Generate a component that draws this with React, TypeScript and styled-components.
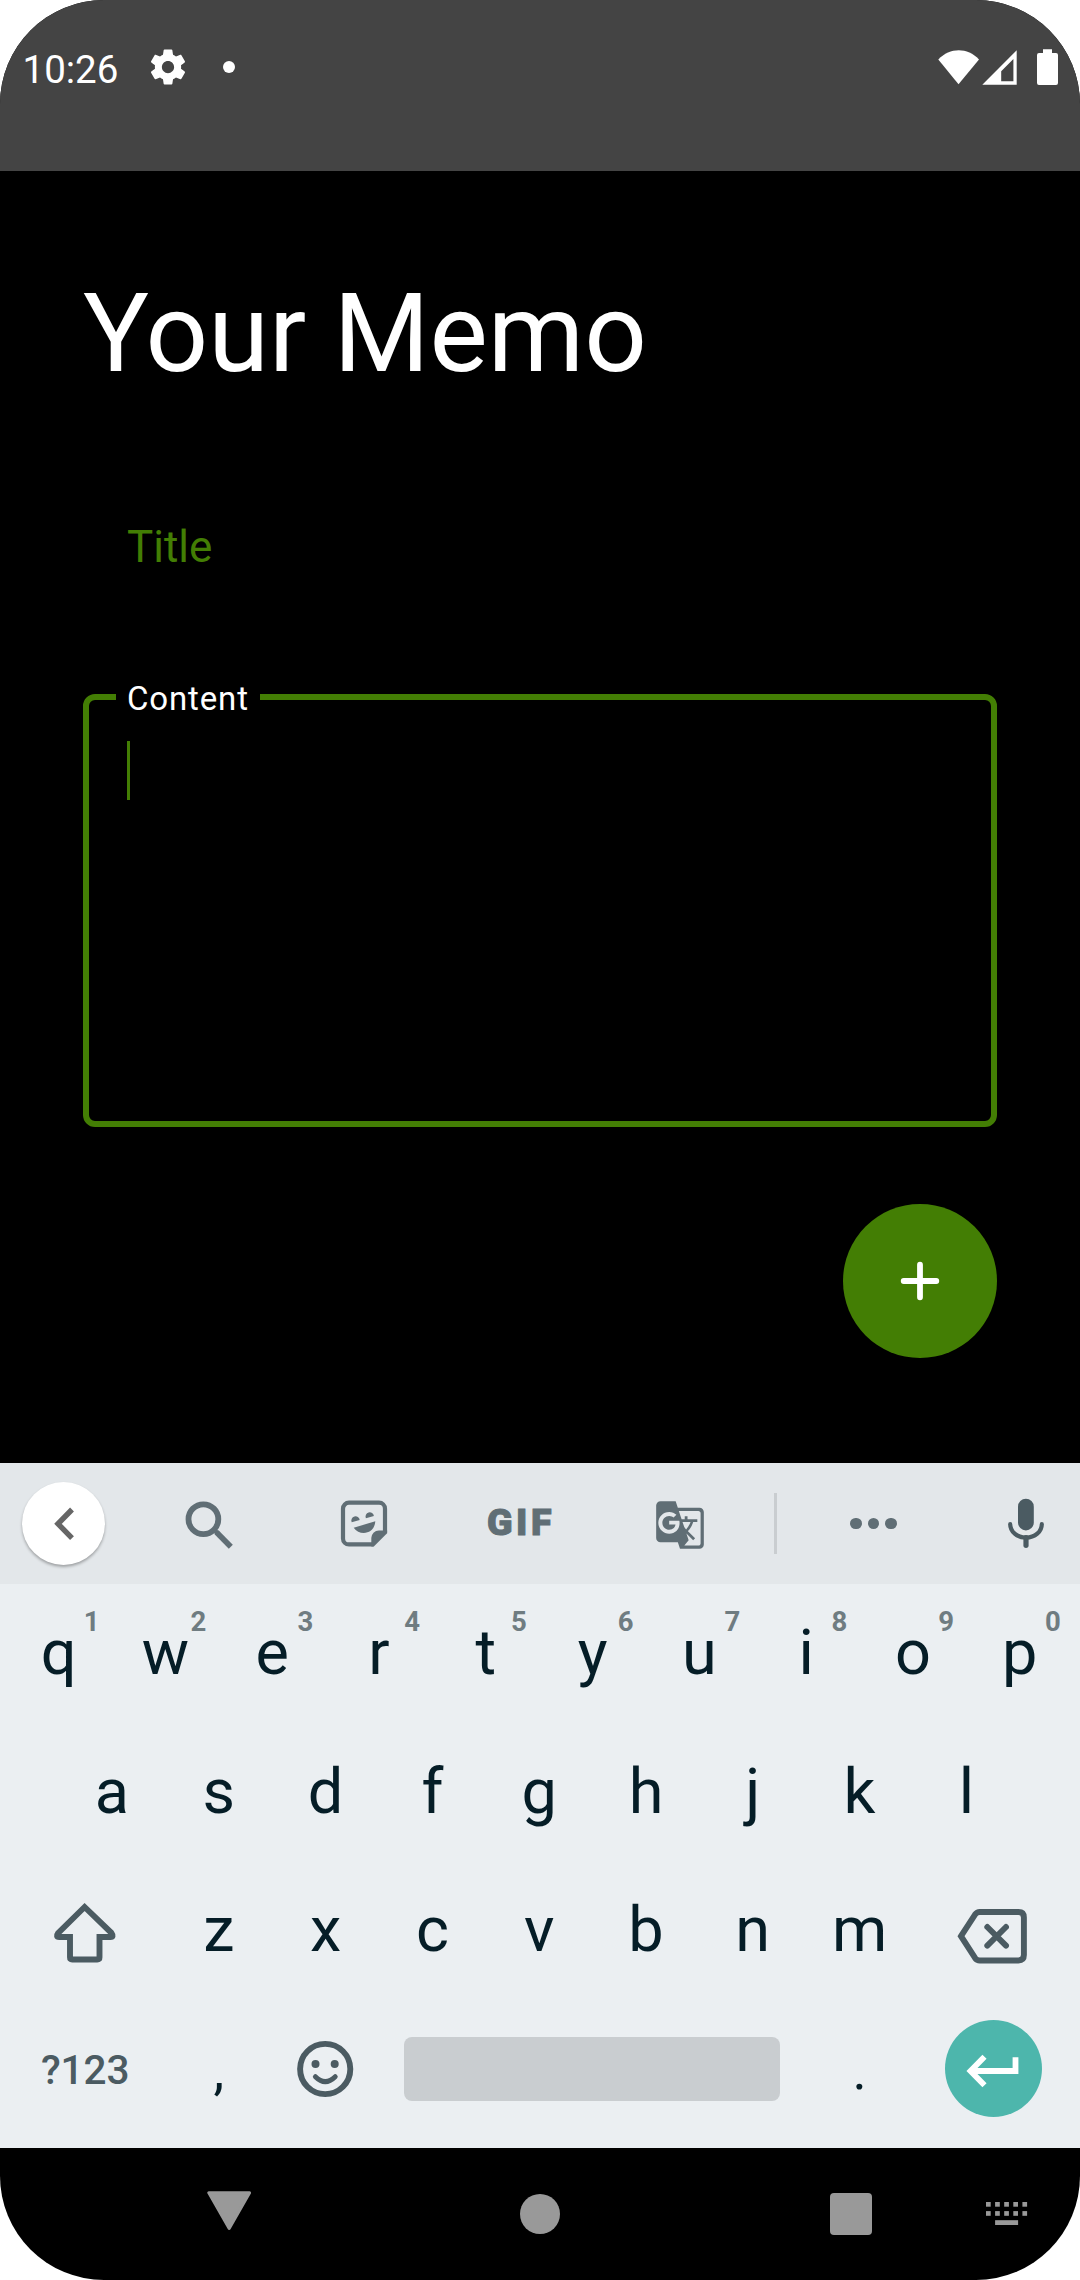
import React from "react";
import styled, { createGlobalStyle } from "styled-components";
import { MdGTranslate } from "react-icons/md";

const green = "#437e04";
const slate = "#606e75";
const darkSlate = "#4b5b62";

const GlobalStyle = createGlobalStyle`
  * { box-sizing: border-box; }
  body { margin: 0; background: #fff; font-family: Roboto, "Noto Sans", sans-serif; }
  svg { display: block; flex: none; }
`;

const Screen = styled.div`
  width: 1080px;
  height: 2280px;
  display: flex;
  flex-direction: column;
  overflow: hidden;
  border-radius: 104px;
  background: #000;
`;

const StatusBar = styled.header`
  height: 171px;
  padding: 40px 22px 0 22.5px;
  display: flex;
  justify-content: space-between;
  align-items: flex-start;
  background: #444;
  color: #fff;
`;

const StatusGroup = styled.div`
  height: 54px;
  display: flex;
  align-items: center;
`;

const Clock = styled.span`
  width: 124.5px;
  font-size: 38.5px;
  line-height: 59px;
  padding-top: 5px;
`;

const Dot = styled.span`
  width: 12px;
  height: 12px;
  margin-left: 34px;
  border-radius: 50%;
  background: #fff;
`;

const Main = styled.main`
  height: 1292px;
  padding: 97px 83px 0;
  display: flex;
  flex-direction: column;
`;

const Heading = styled.h1`
  margin: 0;
  color: #fff;
  font-size: 110px;
  font-weight: 400;
  line-height: 131px;
`;

const TitleField = styled.div`
  height: 154px;
  margin-top: 71px;
  padding: 0 44px;
  color: ${green};
  font-size: 44px;
  line-height: 154px;
`;

const ContentField = styled.div`
  position: relative;
  height: 433px;
  margin-top: 70px;
  padding: 41px 38px;
  border: 6px solid ${green};
  border-radius: 12px;
`;

const FieldLabel = styled.span`
  position: absolute;
  left: 27px;
  top: -19px;
  width: 144px;
  padding-left: 11px;
  background: #000;
  color: #fff;
  font-size: 33px;
  letter-spacing: 0.85px;
  line-height: 36px;
`;

const Caret = styled.div`
  width: 3px;
  height: 59px;
  background: ${green};
`;

const Fab = styled.button`
  width: 154px;
  height: 154px;
  margin-top: 77px;
  padding: 0;
  align-self: flex-end;
  display: grid;
  place-items: center;
  border: 0;
  border-radius: 50%;
  background: ${green};
`;

const Keyboard = styled.section`
  height: 685px;
  background: #ebeff2;
`;

const Toolbar = styled.div`
  height: 121px;
  display: grid;
  grid-template-columns: 127px 163px 148px 164px 156px 35px 161px 126px;
  background: #e3e7ea;
`;

const Tool = styled.div<{ $end?: boolean }>`
  display: flex;
  align-items: center;
  justify-content: ${(p) => (p.$end ? "flex-end" : "center")};
  padding-right: ${(p) => (p.$end ? "24px" : "0")};
  color: ${slate};
`;

const BackCircle = styled.div`
  width: 83px;
  height: 83px;
  margin-bottom: 1px;
  border-radius: 50%;
  background: #fff;
  box-shadow: 0 2px 3px rgba(0, 0, 0, 0.3);
`;

const GifLabel = styled.span`
  margin: 0 -2px 3px 0;
  font-size: 37.5px;
  font-weight: 900;
  line-height: 58px;
  letter-spacing: 3.5px;
  -webkit-text-stroke: 1px ${slate};
`;

const TranslateIcon = styled(MdGTranslate)`
  width: 52px;
  height: 52px;
  margin-top: 3px;
`;

const Divider = styled.div`
  width: 3px;
  height: 61px;
  background: #c9cdd0;
`;

const Dots = styled.div`
  display: flex;
  gap: 6px;
`;

const MoreDot = styled.span`
  width: 11.6px;
  height: 11.6px;
  border-radius: 50%;
  background: ${slate};
`;

const KeyRow = styled.div<{ $inset?: boolean }>`
  height: 138.5px;
  padding: 0 ${(p) => (p.$inset ? "58.6px" : "5.2px")};
  display: flex;
`;

const Key = styled.div<{ $units?: number }>`
  position: relative;
  width: ${(p) => (p.$units ?? 1) * 106.8}px;
  flex: none;
  display: flex;
  align-items: center;
  justify-content: center;
  color: #051d27;
  font-size: 63px;
  line-height: 138.5px;
`;

const PunctuationKey = styled(Key)`
  padding-top: 5px;
  font-size: 54px;
`;

const Hint = styled.span`
  position: absolute;
  left: 78.5px;
  top: 21px;
  width: 16px;
  color: #6f7c81;
  font-size: 27.5px;
  font-weight: 700;
  line-height: 34px;
  text-align: center;
`;

const SymbolsLabel = styled.span`
  padding-top: 2px;
  color: ${darkSlate};
  font-size: 40.5px;
  font-weight: 500;
`;

const SpaceBar = styled.div`
  width: 376px;
  height: 64px;
  margin-right: 1px;
  border-radius: 8px;
  background: #c9cdd0;
`;

const EnterKey = styled.div`
  width: 97px;
  height: 97px;
  margin-left: 1px;
  display: grid;
  place-items: center;
  border-radius: 50%;
  background: #4db6ac;
`;

const NavBar = styled.nav`
  height: 132px;
  display: flex;
  align-items: center;
`;

const NavItem = styled.div<{ $before: number }>`
  margin-left: ${(p) => p.$before}px;
`;

const HomeButton = styled.div`
  width: 40px;
  height: 40px;
  border-radius: 50%;
  background: #999;
`;

const RecentsButton = styled.div`
  width: 42px;
  height: 42px;
  border-radius: 4px;
  background: #999;
`;

const GearIcon = () => (
  <svg width="42" height="42" viewBox="0 0 24 24" fill="#fff">
    <path d="M19.43 12.98c.04-.32.07-.64.07-.98s-.03-.66-.07-.98l2.11-1.65c.19-.15.24-.42.12-.64l-2-3.46c-.12-.22-.39-.3-.61-.22l-2.49 1c-.52-.4-1.08-.73-1.69-.98l-.38-2.65C14.46 2.18 14.25 2 14 2h-4c-.25 0-.46.18-.49.42l-.38 2.65c-.61.25-1.17.59-1.69.98l-2.49-1c-.23-.09-.49 0-.61.22l-2 3.46c-.13.22-.07.49.12.64l2.11 1.65c-.04.32-.07.65-.07.98s.03.66.07.98l-2.11 1.65c-.19.15-.24.42-.12.64l2 3.46c.12.22.39.3.61.22l2.49-1c.52.4 1.08.73 1.69.98l.38 2.65c.03.24.24.42.49.42h4c.25 0 .46-.18.49-.42l.38-2.65c.61-.25 1.17-.59 1.69-.98l2.49 1c.23.09.49 0 .61-.22l2-3.46c.12-.22.07-.49-.12-.64l-2.11-1.65zM12 15.5c-1.93 0-3.5-1.57-3.5-3.5s1.57-3.5 3.5-3.5 3.5 1.57 3.5 3.5-1.57 3.500-3.500 3.500z" />
  </svg>
);

const StatusIcons = () => (
  <svg width="120" height="36" viewBox="0 0 120 36" fill="#fff">
    <path d="M0.3 10.5C12 -1.8 29.5 -1.8 41 10.5L20.5 35.3Z" />
    <path fillRule="evenodd" d="M44.3 35.8 78.700 1.300V35.800ZM63.200 32.200H75.400V10L63.200 22.200Z" />
    <path d="M105 0.300h9v3.700h4q2 0 2 2v28q0 2-2 2H101q-2 0-2-2V6q0-2 2-2h4Z" />
  </svg>
);

const PlusIcon = () => (
  <svg width="40" height="40" viewBox="0 0 40 40" stroke="#fff" strokeWidth="5.8" strokeLinecap="round">
    <path d="M20 3.700V36.300M3.700 20H36.300" />
  </svg>
);

const ChevronIcon = () => (
  <svg width="83" height="83" viewBox="0 0 83 83" fill="none" stroke="#666" strokeWidth="5.4">
    <path d="M50 27.500 36 41.800 50 56.100" />
  </svg>
);

const SearchIcon = () => (
  <svg width="60" height="60" viewBox="0 0 60 60" fill="none" stroke={slate}>
    <circle cx="24.4" cy="25.2" r="14.9" strokeWidth="5.8" />
    <path d="M35 36 39 39.500" strokeWidth="4.5" />
    <path d="M37.500 38.200 51.800 52.800" strokeWidth="5.6" />
  </svg>
);

const StickerIcon = () => (
  <svg width="60" height="60" viewBox="0 0 60 60" fill={slate}>
    <path
      d="M39.500 50.400H15a6 6 0 0 1-6-6V14.700a6 6 0 0 1 6-6H45a6 6 0 0 1 6 6V38.500"
      fill="none"
      stroke={slate}
      strokeWidth="4.2"
    />
    <path d="M37.300 52.500V44a7.600 7.600 0 0 1 7.600-7.600H53.100V39.300L39.800 52.500Z" />
    <path d="M17.700 28.200a4.200 4.200 0 1 1 8-2.200Z" />
    <path d="M31.900 24.200a4.200 4.200 0 1 1 8-2.200Z" />
    <path d="M19.700 33.700 41.300 27.300C40.500 40.500 25.500 42.200 19.700 33.700Z" />
  </svg>
);

const MicIcon = () => (
  <svg width="60" height="60" viewBox="0 0 60 60" fill="none" stroke={darkSlate} strokeLinecap="round">
    <rect x="22" y="4.8" width="15.8" height="31.6" rx="7.9" fill={darkSlate} stroke="none" />
    <path d="M14.200 30.200C14.200 37.500 21 43.600 30 43.600S45.800 37.500 45.800 30.200" strokeWidth="4.2" />
    <path d="M30 43.500V51.300" strokeWidth="5.2" />
  </svg>
);

const ShiftIcon = () => (
  <svg width="70" height="70" viewBox="0 0 70 70" fill="none" stroke={darkSlate} strokeWidth="5.9">
    <path d="M34.600 12 8.300 37.800Q5.300 42 9.300 42H20V62.300q0 2.200 2.200 2.200H47.300q2.200 0 2.200-2.200V42H60.300q4 0 1-4.200Z" />
  </svg>
);

const BackspaceIcon = () => (
  <svg width="76" height="76" viewBox="0 0 76 76" fill="none" stroke={darkSlate} strokeWidth="5.9">
    <path d="M6 44.200 20 22.600Q21.900 20 24.700 20H63.500q5.400 0 5.400 5.400V63.100q0 5.400-5.400 5.400H24.700Q21.900 68.500 20 65.900Z" />
    <path d="M32.300 35 51 53.700M51 35 32.300 53.700" strokeLinecap="round" />
  </svg>
);

const EmojiIcon = () => (
  <svg width="60" height="60" viewBox="0 0 60 60" fill="none" stroke={darkSlate}>
    <circle cx="29.2" cy="30" r="25.1" strokeWidth="5.9" />
    <path d="M19.400 37.700Q29.200 47.500 39.200 37.700" strokeWidth="5" strokeLinecap="round" />
    <circle cx="19.5" cy="25" r="4" fill={darkSlate} stroke="none" />
    <circle cx="38.7" cy="25" r="4" fill={darkSlate} stroke="none" />
  </svg>
);

const ReturnIcon = () => (
  <svg width="60" height="60" viewBox="0 0 60 60" fill="none" stroke="#fff" strokeWidth="5.8">
    <path d="M20.500 17.700 6.500 32 20.500 46.300M8 32H51.500V18.300" />
  </svg>
);

const HideKeyboardIcon = () => (
  <svg width="45" height="46" viewBox="0 0 45 46" fill="#999" stroke="#999" strokeWidth="3" strokeLinejoin="round">
    <path d="M1.800 1.800H42.600L22.200 37.500Z" />
  </svg>
);

const KeyboardIcon = () => (
  <svg width="43" height="24" viewBox="0 0 43 24" fill="#999">
    {[0, 9.1, 18.2, 27.3, 36.4].map((x) => (
      <React.Fragment key={x}>
        <rect x={x} y="0" width="4.7" height="4.7" />
        <rect x={x} y="9.1" width="4.7" height="4.7" />
      </React.Fragment>
    ))}
    <rect x="9.1" y="18.2" width="23" height="4.8" />
  </svg>
);

const hintKeys = "qwertyuiop".split("");
const homeKeys = "asdfghjkl".split("");
const bottomKeys = "zxcvbnm".split("");

export default function App() {
  return (
    <>
      <GlobalStyle />
      <Screen>
        <StatusBar>
          <StatusGroup>
            <Clock>10:26</Clock>
            <GearIcon />
            <Dot />
          </StatusGroup>
          <StatusGroup>
            <StatusIcons />
          </StatusGroup>
        </StatusBar>

        <Main>
          <Heading>Your Memo</Heading>
          <TitleField>Title</TitleField>
          <ContentField>
            <FieldLabel>Content</FieldLabel>
            <Caret />
          </ContentField>
          <Fab aria-label="Add">
            <PlusIcon />
          </Fab>
        </Main>

        <Keyboard>
          <Toolbar>
            <Tool>
              <BackCircle>
                <ChevronIcon />
              </BackCircle>
            </Tool>
            <Tool>
              <SearchIcon />
            </Tool>
            <Tool>
              <StickerIcon />
            </Tool>
            <Tool>
              <GifLabel>GIF</GifLabel>
            </Tool>
            <Tool>
              <TranslateIcon />
            </Tool>
            <Tool>
              <Divider />
            </Tool>
            <Tool>
              <Dots>
                <MoreDot />
                <MoreDot />
                <MoreDot />
              </Dots>
            </Tool>
            <Tool $end>
              <MicIcon />
            </Tool>
          </Toolbar>

          <KeyRow>
            {hintKeys.map((k, i) => (
              <Key key={k}>
                {k}
                <Hint>{(i + 1) % 10}</Hint>
              </Key>
            ))}
          </KeyRow>
          <KeyRow $inset>
            {homeKeys.map((k) => (
              <Key key={k}>{k}</Key>
            ))}
          </KeyRow>
          <KeyRow>
            <Key $units={1.5}>
              <ShiftIcon />
            </Key>
            {bottomKeys.map((k) => (
              <Key key={k}>{k}</Key>
            ))}
            <Key $units={1.5}>
              <BackspaceIcon />
            </Key>
          </KeyRow>
          <KeyRow>
            <Key $units={1.5}>
              <SymbolsLabel>?123</SymbolsLabel>
            </Key>
            <PunctuationKey>,</PunctuationKey>
            <Key>
              <EmojiIcon />
            </Key>
            <Key $units={4}>
              <SpaceBar />
            </Key>
            <PunctuationKey>.</PunctuationKey>
            <Key $units={1.5}>
              <EnterKey>
                <ReturnIcon />
              </EnterKey>
            </Key>
          </KeyRow>
        </Keyboard>

        <NavBar>
          <NavItem $before={206.5}>
            <HideKeyboardIcon />
          </NavItem>
          <NavItem $before={268.5}>
            <HomeButton />
          </NavItem>
          <NavItem $before={270}>
            <RecentsButton />
          </NavItem>
          <NavItem $before={114}>
            <KeyboardIcon />
          </NavItem>
        </NavBar>
      </Screen>
    </>
  );
}
